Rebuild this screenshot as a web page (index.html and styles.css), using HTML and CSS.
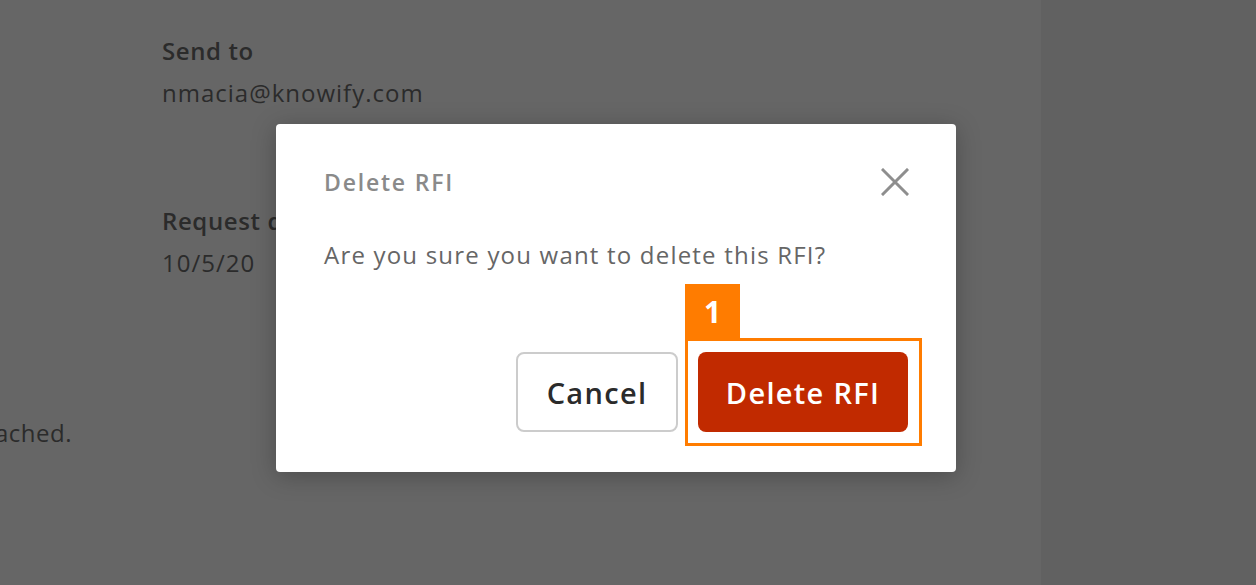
FILE: index.html
```html
<!DOCTYPE html>
<html>
<head>
<meta charset="utf-8">
<link rel="stylesheet" href="styles.css">
</head>
<body>
<div class="page">
  <main class="content">
    <div class="field">
      <div class="label">Send to</div>
      <div class="value">nmacia@knowify.com</div>
    </div>
    <div class="field">
      <div class="label">Request date</div>
      <div class="value">10/5/20</div>
    </div>
    <div class="clipped"><span>ached.</span></div>
  </main>
  <aside class="side"></aside>
</div>

<div class="dialog">
  <div class="dialog-head">
    <h2 class="dialog-title">Delete RFI</h2>
    <svg class="close" width="28" height="28" viewBox="0 0 28 28"><path d="M2 2 L26 26 M26 2 L2 26" stroke="#8e8e8e" stroke-width="3" stroke-linecap="square" fill="none"/></svg>
  </div>
  <p class="dialog-body">Are you sure you want to delete this RFI?</p>
  <div class="dialog-actions">
    <button class="btn btn-cancel">Cancel</button>
    <div class="highlight-wrap">
      <button class="btn btn-delete">Delete RFI</button>
      <div class="highlight"></div>
      <div class="badge">1</div>
    </div>
  </div>
</div>
</body>
</html>
```

FILE: styles.css
```css
html, body {
  margin: 0;
  padding: 0;
}
body {
  width: 1256px;
  height: 585px;
  overflow: hidden;
  background: #666666;
  font-family: "Open Sans", Lato, sans-serif;
  position: relative;
}
.page {
  display: flex;
  height: 585px;
}
.content {
  width: 1041px;
  padding-left: 162px;
  padding-top: 35px;
  box-sizing: border-box;
  color: #2b2b2b;
}
.side {
  flex: 1;
  background: #616161;
}
.field {
  margin-bottom: 96px;
}
.label {
  font-size: 24px;
  font-weight: 600;
  line-height: 32px;
  letter-spacing: 0.6px;
}
.value {
  font-size: 24px;
  line-height: 32px;
  margin-top: 10px;
  letter-spacing: 1px;
}
.clipped {
  margin-left: -162px;
  margin-top: 138px;
  width: 72px;
  display: flex;
  justify-content: flex-end;
  white-space: nowrap;
  font-size: 24px;
  line-height: 32px;
  letter-spacing: 0.5px;
}
.dialog {
  position: absolute;
  left: 276px;
  top: 124px;
  width: 680px;
  height: 348px;
  box-sizing: border-box;
  background: #fff;
  border-radius: 4px;
  box-shadow: 0 4px 24px rgba(0,0,0,0.25);
  padding: 44px 48px 40px 48px;
  display: flex;
  flex-direction: column;
}
.dialog-head {
  display: flex;
  justify-content: space-between;
  align-items: center;
  height: 28px;
}
.dialog-title {
  margin: 0;
  font-size: 23px;
  font-weight: 600;
  letter-spacing: 1.8px;
  color: #8a8a8a;
}
.close {
  margin-right: -1px;
}
.dialog-body {
  margin: 44px 0 0 0;
  font-size: 24px;
  line-height: 30px;
  letter-spacing: 1.2px;
  color: #666;
}
.dialog-actions {
  margin-top: auto;
  display: flex;
  justify-content: flex-end;
  gap: 20px;
}
.btn {
  height: 80px;
  border-radius: 8px;
  font-family: "Open Sans", Lato, sans-serif;
  font-size: 29px;
  font-weight: 600;
  letter-spacing: 1.3px;
  cursor: pointer;
}
.btn-cancel {
  width: 162px;
  background: #fff;
  border: 2px solid #cccccc;
  color: #2b2b2b;
}
.btn-delete {
  width: 210px;
  background: #c12a00;
  border: none;
  color: #fff;
}
.highlight-wrap {
  position: relative;
}
.highlight {
  position: absolute;
  left: -13px;
  top: -14px;
  right: -14px;
  bottom: -14px;
  border: 3px solid #ff7c00;
  pointer-events: none;
}
.badge {
  position: absolute;
  left: -13px;
  top: -68px;
  width: 55px;
  height: 54px;
  background: #ff7c00;
  color: #fff;
  font-size: 30px;
  font-weight: 700;
  display: flex;
  align-items: center;
  justify-content: center;
}
```
